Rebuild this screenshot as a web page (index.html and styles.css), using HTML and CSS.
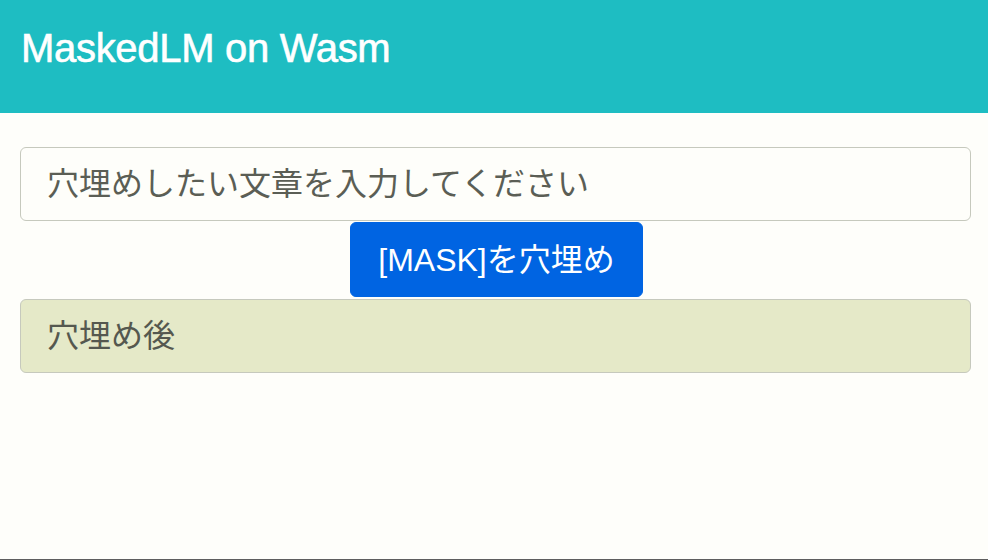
FILE: index.html
```html
<!DOCTYPE html>
<html lang="ja">
<head>
<meta charset="utf-8">
<title>MaskedLM on Wasm</title>
<link rel="stylesheet" href="styles.css">
</head>
<body>
<div class="page">
  <header class="navbar">
    <h1 class="title">MaskedLM on Wasm</h1>
  </header>
  <main class="content">
    <input class="field" type="text" placeholder="穴埋めしたい文章を入力してください">
    <div class="actions">
      <button class="btn" type="button">[MASK]を穴埋め</button>
    </div>
    <div class="field result">穴埋め後</div>
  </main>
</div>
</body>
</html>
```

FILE: styles.css
```css
html, body {
  margin: 0;
  padding: 0;
  background: #fefefa;
}

body {
  font-family: "Liberation Sans", "Noto Sans CJK JP", sans-serif;
}

.page {
  height: 559px;
  border-bottom: 1px solid #5e5e5e;
  display: flex;
  flex-direction: column;
}

.navbar {
  height: 113px;
  box-sizing: border-box;
  padding: 25px 21px 0;
  background: #1ebdc2;
}

.title {
  margin: 0;
  font-size: 40px;
  line-height: 46px;
  font-weight: 400;
  color: #ffffff;
  letter-spacing: -0.3px;
  -webkit-text-stroke: 0.6px #ffffff;
}

.content {
  padding: 34px 17px 0 20px;
  display: flex;
  flex-direction: column;
}

.field {
  box-sizing: border-box;
  height: 74px;
  width: 100%;
  margin: 0;
  padding: 12px 26px;
  border: 1px solid #c6c9bd;
  border-radius: 6px;
  background: #fefefa;
  font-family: "Liberation Sans", "Noto Sans CJK JP", sans-serif;
  font-size: 32px;
  line-height: 48px;
  color: #55584f;
  outline: none;
}

.field::placeholder {
  color: #5b5e55;
  opacity: 1;
}

.actions {
  display: flex;
  justify-content: center;
  margin-top: 1px;
}

.btn {
  box-sizing: border-box;
  height: 75px;
  padding: 12px 27px;
  border: 1px solid #0064e2;
  border-radius: 6px;
  background: #0064e2;
  color: #ffffff;
  font-family: "Liberation Sans", "Noto Sans CJK JP", sans-serif;
  font-size: 32px;
  line-height: 48px;
  margin-left: 2px;
}

.result {
  margin-top: 2px;
  background: #e5e9c8;
  color: #55584f;
}
```
